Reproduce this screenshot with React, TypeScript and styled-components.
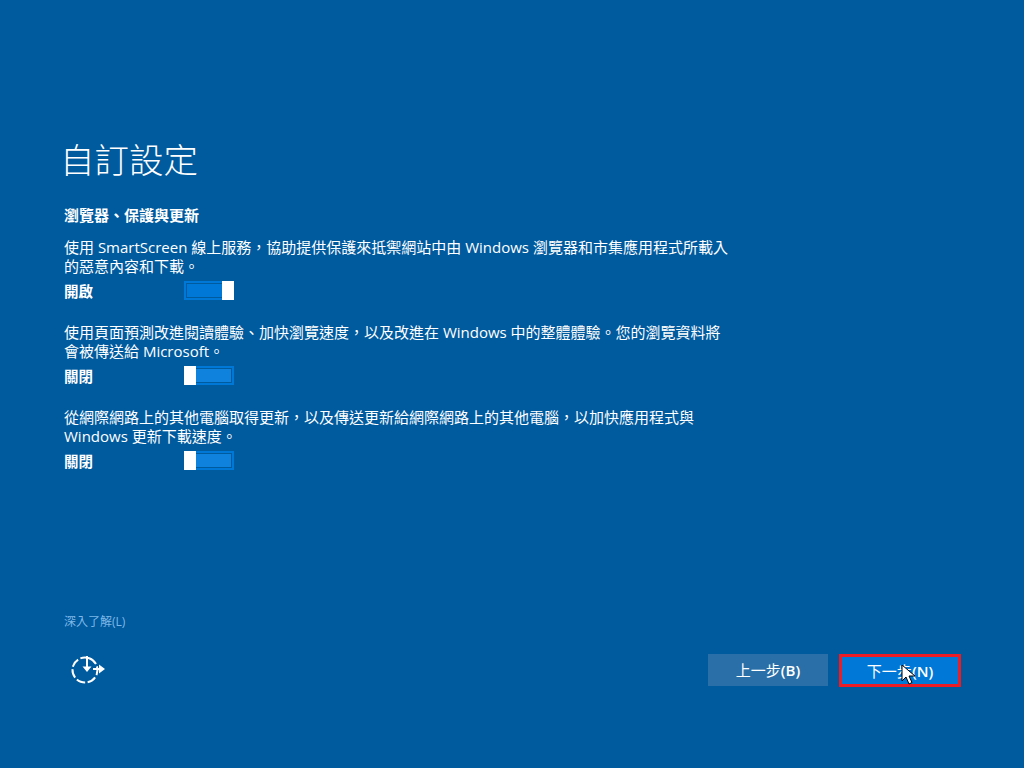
import React from "react";
import styled, { createGlobalStyle } from "styled-components";

const Global = createGlobalStyle`
  html, body { margin: 0; padding: 0; background: #005a9e; }
  body { font-family: "Open Sans", "Noto Sans CJK TC", sans-serif; color: #fff; }
`;

const Page = styled.div`
  width: 1024px;
  height: 768px;
  box-sizing: border-box;
  padding: 138px 63px 0 64px;
  display: flex;
  flex-direction: column;
  overflow: hidden;
`;

const Title = styled.h1`
  margin: 0 0 0 -4px;
  font-size: 34.5px;
  line-height: 44px;
  font-weight: 300;
`;

const Heading = styled.h2`
  margin: 23px 0 13px;
  font-size: 15px;
  line-height: 20px;
  font-weight: 700;
`;

const Settings = styled.div`
  display: flex;
  flex-direction: column;
  gap: 23px;
  flex: 1;
`;

const Setting = styled.section`
  display: flex;
  flex-direction: column;
`;

const Description = styled.p`
  margin: 0;
  font-size: 15px;
  line-height: 19px;
  white-space: nowrap;
`;

const ToggleRow = styled.div`
  display: flex;
  align-items: center;
  margin-top: 5px;
  height: 19px;
`;

const ToggleLabel = styled.span`
  width: 120px;
  font-size: 14.5px;
  font-weight: 700;
`;

const Toggle = styled.div<{ $on: boolean }>`
  position: relative;
  width: 50px;
  height: 19px;
  box-sizing: border-box;
  border: 2px solid #0078d7;
  background: #005a9e;
  padding: 1px;
  display: flex;
  justify-content: ${(p) => (p.$on ? "flex-start" : "flex-end")};
`;

const ToggleFill = styled.div<{ $on: boolean }>`
  width: 36px;
  height: 100%;
  background: ${(p) => (p.$on ? "#0078d7" : "#0f82de")};
`;

const ToggleThumb = styled.div<{ $on: boolean }>`
  position: absolute;
  top: -2px;
  bottom: -2px;
  width: 12px;
  background: #fff;
  ${(p) => (p.$on ? "right: -2px;" : "left: -2px;")}
`;

const LearnMore = styled.a`
  font-size: 12px;
  line-height: 16px;
  color: #7db8e8;
  margin-bottom: 23px;
`;

const Footer = styled.div`
  display: flex;
  align-items: center;
  height: 34px;
  margin-bottom: 81px;
`;

const BackIcon = styled.svg`
  width: 36px;
  height: 30px;
  margin-left: 7px;
  flex: none;
`;

const Buttons = styled.div`
  margin-left: auto;
  display: flex;
  align-items: flex-start;
  gap: 11px;
`;

const Button = styled.button<{ $primary?: boolean }>`
  position: relative;
  width: ${(p) => (p.$primary ? "122px" : "120px")};
  height: ${(p) => (p.$primary ? "33px" : "32px")};
  padding: 0;
  box-sizing: border-box;
  font-family: inherit;
  font-size: 15px;
  font-weight: 400;
  color: #fff;
  background: ${(p) => (p.$primary ? "#0078d7" : "#2a6fa8")};
  border: ${(p) => (p.$primary ? "3px solid #ed1c24" : "none")};
`;

const AccessKey = styled.span`
  font-weight: 600;
`;

const Cursor = styled.svg`
  position: absolute;
  left: 59px;
  top: 7px;
  width: 16px;
  height: 22px;
`;

export default function App() {
  return (
    <Page>
      <Global />
      <Title>自訂設定</Title>
      <Heading>瀏覽器、保護與更新</Heading>
      <Settings>
        <Setting>
          <Description>
            使用 SmartScreen 線上服務，協助提供保護來抵禦網站中由 Windows 瀏覽器和市集應用程式所載入
            <br />
            的惡意內容和下載。
          </Description>
          <ToggleRow>
            <ToggleLabel>開啟</ToggleLabel>
            <Toggle $on>
              <ToggleFill $on />
              <ToggleThumb $on />
            </Toggle>
          </ToggleRow>
        </Setting>
        <Setting>
          <Description>
            使用頁面預測改進閱讀體驗、加快瀏覽速度，以及改進在 Windows 中的整體體驗。您的瀏覽資料將
            <br />
            會被傳送給 Microsoft。
          </Description>
          <ToggleRow>
            <ToggleLabel>關閉</ToggleLabel>
            <Toggle $on={false}>
              <ToggleFill $on={false} />
              <ToggleThumb $on={false} />
            </Toggle>
          </ToggleRow>
        </Setting>
        <Setting>
          <Description>
            從網際網路上的其他電腦取得更新，以及傳送更新給網際網路上的其他電腦，以加快應用程式與
            <br />
            Windows 更新下載速度。
          </Description>
          <ToggleRow>
            <ToggleLabel>關閉</ToggleLabel>
            <Toggle $on={false}>
              <ToggleFill $on={false} />
              <ToggleThumb $on={false} />
            </Toggle>
          </ToggleRow>
        </Setting>
      </Settings>
      <LearnMore>深入了解(L)</LearnMore>
      <Footer>
        <BackIcon viewBox="0 0 36 30" fill="none" stroke="#fff">
          <circle cx="14" cy="15" r="12.500" strokeWidth="2" strokeDasharray="9 2.500" transform="rotate(-70 14 15)" />
          <path d="M16 1v12" strokeWidth="2" />
          <path d="M11.500 11.500h9l-4.500 5.500z" fill="#fff" stroke="none" />
          <path d="M22 14h8" strokeWidth="2" />
          <path d="M28 9.500l6 4.500-6 4.500z" fill="#fff" stroke="none" />
        </BackIcon>
        <Buttons>
          <Button>
            上一步<AccessKey>(B)</AccessKey>
          </Button>
          <Button $primary>
            下一步<AccessKey>(N)</AccessKey>
            <Cursor viewBox="0 0 16 22">
              <path d="M1 1v16l4-4 3 7 3-1.500-3-6.500h6z" fill="#fff" stroke="#000" strokeWidth="1" />
            </Cursor>
          </Button>
        </Buttons>
      </Footer>
    </Page>
  );
}
